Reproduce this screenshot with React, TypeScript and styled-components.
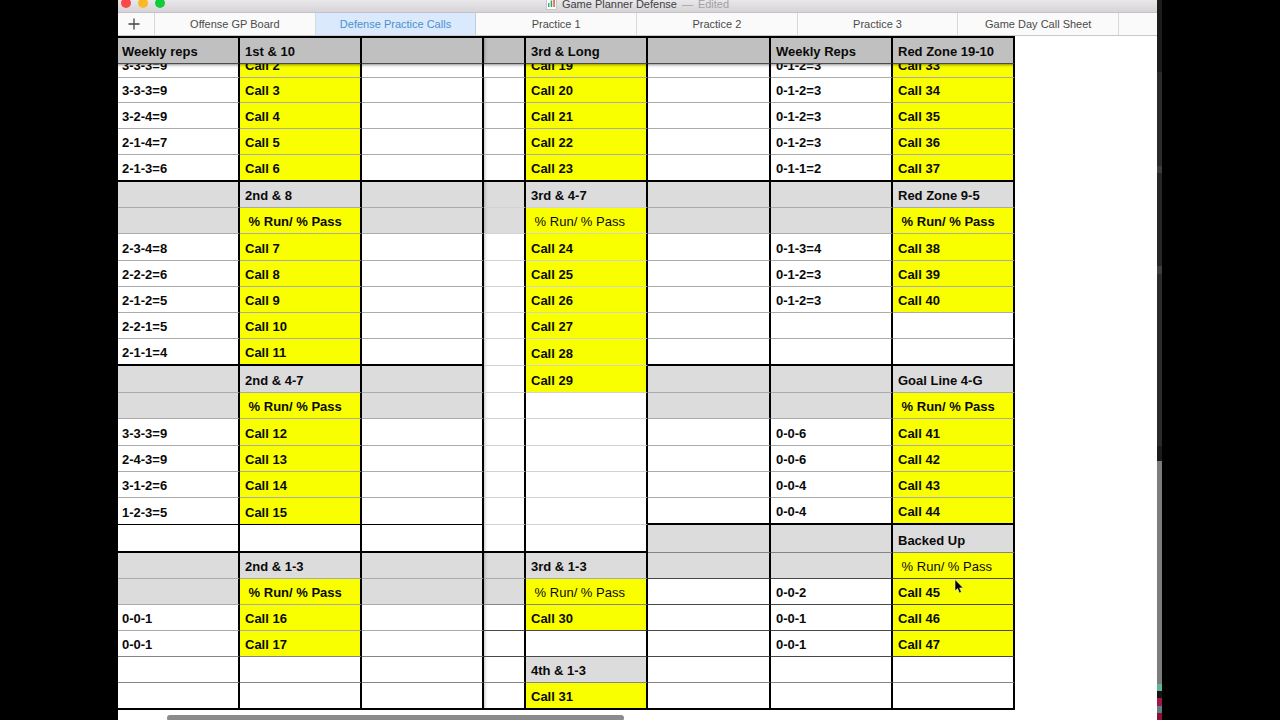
import React from 'react';
import styled, { createGlobalStyle, css } from 'styled-components';

const GlobalStyle = createGlobalStyle`
  * { box-sizing: border-box; }
  body { margin: 0; background: #000; font-family: 'Liberation Sans', Arial, sans-serif; }
`;

const Page = styled.div`
  display: flex;
  height: 100vh;
  padding: 0 118px;
  overflow: hidden;
  background: #000;
`;

const Window = styled.main`
  flex: 1;
  min-width: 0;
  display: flex;
  flex-direction: column;
  background: #fff;
  overflow: hidden;
`;

const DesktopEdge = styled.div`
  flex: 0 0 5px;
  background: linear-gradient(
    #1c1c1c 0 10%, #2b2b2b 10% 23%, #3c3c3c 23% 24%, #262626 24% 37%, #3e3e3e 37% 38%,
    #2b2b2b 38% 62%, #1c1c1c 62% 64%, #7d7d7d 64% 95%, #5fb495 95% 96%, #151515 96% 97%,
    #a01848 97% 98%, #5d7f80 98% 99%, #8c1038 99%
  );
`;

const TitleBar = styled.header`
  flex: none;
  display: grid;
  grid-template-columns: 1fr auto 1fr;
  grid-template-rows: 12px;
  align-items: end;
  height: 13px;
  overflow: hidden;
  background: linear-gradient(#e9e7e9, #d6d4d6);
  border-bottom: 1px solid #c4c2c4;
`;

const Lights = styled.div`
  display: flex;
  gap: 7px;
  padding: 0 0 4px 3px;
`;

const Light = styled.button<{ $color: string }>`
  width: 10px;
  height: 10px;
  padding: 0;
  border: 0;
  border-radius: 50%;
  background: ${(p) => p.$color};
`;

const Title = styled.h1`
  display: flex;
  align-items: center;
  gap: 5px;
  margin: 0;
  font-size: 11px;
  line-height: 16px;
  font-weight: 400;
  color: #3f3f3f;
`;

const Edited = styled.span`
  color: #a3a1a3;
`;

const TabBar = styled.nav`
  flex: none;
  display: flex;
  height: 23px;
  padding-right: 38px;
  background: #fafafa;
  border-bottom: 1px solid #c9c9c9;
`;

const AddTab = styled.button`
  flex: 0 0 37px;
  display: flex;
  align-items: center;
  justify-content: center;
  padding: 0 4px 0 0;
  border: 0;
  border-right: 1px solid #d8d8d8;
  background: transparent;
`;

const Tab = styled.button<{ $active: boolean }>`
  flex: 1 1 0;
  padding: 0;
  border: 0;
  border-right: 1px solid ${(p) => (p.$active ? '#b9cfe8' : '#d8d8d8')};
  background: ${(p) => (p.$active ? '#dbe9fc' : 'transparent')};
  color: ${(p) => (p.$active ? '#4a90d0' : '#4a4a4a')};
  font: 11px/22px 'Liberation Sans', Arial, sans-serif;
  white-space: nowrap;
`;

const Sheet = styled.table`
  flex: none;
  align-self: flex-start;
  table-layout: fixed;
  width: 897px;
  border-collapse: separate;
  border-spacing: 0;
  border-top: 2px solid #000;
  font-size: 13px;
  color: #0a0a0a;
`;

const Col = styled.col<{ $width: number }>`
  width: ${(p) => p.$width}px;
`;

const freezeShadow = css`
  box-shadow: inset 4px 0 3px -3px rgba(0, 0, 0, 0.25);
`;

const HeadCell = styled.th<{ $split: boolean }>`
  height: 26px;
  padding: 2px 5px 0;
  line-height: 23px;
  text-align: left;
  white-space: nowrap;
  background: #c0c0c0;
  border-right: 2px solid #000;
  border-bottom: 1px solid #4c4c4c;
  ${(p) => p.$split && freezeShadow}

  &:first-child {
    padding-left: 4px;
  }
`;

type Fill = 'w' | 'g' | 'y';
type Line = 'light' | 'gray' | 'mid' | 'dark' | 'black' | 'thick';

const fills: Record<Fill, string> = { w: '#fff', g: '#dcdcdc', y: '#faff00' };
const lines: Record<Line, string> = {
  light: '1px solid #d2d2d2',
  gray: '1px solid #ababab',
  mid: '1px solid #858585',
  dark: '1px solid #484848',
  black: '1px solid #000',
  thick: '2px solid #000',
};

const CellText = styled.div<{ $height: number }>`
  display: flex;
  align-items: flex-end;
  height: ${(p) => p.$height}px;
  padding: 0 5px;
  overflow: hidden;
  line-height: 22px;
  white-space: pre;
`;

const Cell = styled.td<{ $fill: Fill; $line: Line; $plain: boolean; $split: boolean; $under: boolean }>`
  position: relative;
  padding: 0;
  background: ${(p) => fills[p.$fill]};
  border-right: 2px solid #000;
  border-bottom: ${(p) => lines[p.$line]};
  font-weight: ${(p) => (p.$plain ? 400 : 700)};
  ${(p) => p.$split && freezeShadow}
  ${(p) => p.$under && css`box-shadow: inset 0 3px 3px -2px rgba(0, 0, 0, 0.45);`}

  &:first-child ${CellText} {
    padding-left: 4px;
  }
`;

const Pointer = styled.svg`
  position: absolute;
  left: 61px;
  top: 0;
`;

const ScrollThumb = styled.div`
  flex: none;
  width: 44%;
  height: 6px;
  margin: 5px 0 0 49px;
  border-radius: 3px;
  background: #8b8b8d;
`;

const RUN = ' % Run/ % Pass';
const RUN_PLAIN = ' % Run/ % Pass ';

const columns = [122, 122, 122, 42, 122, 123, 122, 122];
const headings = ['Weekly reps', '1st & 10', '', '', '3rd & Long', '', 'Weekly Reps', 'Red Zone 19-10'];
const tabs = ['Offense GP Board', 'Defense Practice Calls', 'Practice 1', 'Practice 2', 'Practice 3', 'Game Day Call Sheet'];

interface SheetRow {
  height: number;
  fill: string;
  // rules below the left, middle and right blocks of columns
  rule: [Line, Line, Line];
  // reps, left call, middle call, right reps, right call
  text: [string, string, string, string, string];
}

const row = (height: number, fill: string, rule: SheetRow['rule'], ...text: SheetRow['text']): SheetRow => ({
  height,
  fill,
  rule,
  text,
});

const plainRule: SheetRow['rule'] = ['gray', 'gray', 'gray'];
const softRule: SheetRow['rule'] = ['gray', 'light', 'gray'];

const rows: SheetRow[] = [
  row(14, 'wywwywwy', plainRule, '3-3-3=9', 'Call 2', 'Call 19', '0-1-2=3', 'Call 33'),
  row(25, 'wywwywwy', plainRule, '3-3-3=9', 'Call 3', 'Call 20', '0-1-2=3', 'Call 34'),
  row(26, 'wywwywwy', plainRule, '3-2-4=9', 'Call 4', 'Call 21', '0-1-2=3', 'Call 35'),
  row(26, 'wywwywwy', plainRule, '2-1-4=7', 'Call 5', 'Call 22', '0-1-2=3', 'Call 36'),
  row(27, 'wywwywwy', ['thick', 'thick', 'thick'], '2-1-3=6', 'Call 6', 'Call 23', '0-1-1=2', 'Call 37'),
  row(26, 'gggggggg', softRule, '', '2nd & 8', '3rd & 4-7', '', 'Red Zone 9-5'),
  row(26, 'gyggyggy', softRule, '', RUN, RUN_PLAIN, '', RUN),
  row(27, 'wywwywwy', softRule, '2-3-4=8', 'Call 7', 'Call 24', '0-1-3=4', 'Call 38'),
  row(26, 'wywwywwy', softRule, '2-2-2=6', 'Call 8', 'Call 25', '0-1-2=3', 'Call 39'),
  row(26, 'wywwywwy', softRule, '2-1-2=5', 'Call 9', 'Call 26', '0-1-2=3', 'Call 40'),
  row(26, 'wywwywww', softRule, '2-2-1=5', 'Call 10', 'Call 27', '', ''),
  row(27, 'wywwywww', ['thick', 'light', 'thick'], '2-1-1=4', 'Call 11', 'Call 28', '', ''),
  row(27, 'gggwyggg', softRule, '', '2nd & 4-7', 'Call 29', '', 'Goal Line 4-G'),
  row(26, 'gygwwggy', softRule, '', RUN, '', '', RUN),
  row(27, 'wywwwwwy', softRule, '3-3-3=9', 'Call 12', '', '0-0-6', 'Call 41'),
  row(26, 'wywwwwwy', softRule, '2-4-3=9', 'Call 13', '', '0-0-6', 'Call 42'),
  row(26, 'wywwwwwy', softRule, '3-1-2=6', 'Call 14', '', '0-0-4', 'Call 43'),
  row(27, 'wywwwwwy', ['black', 'light', 'thick'], '1-2-3=5', 'Call 15', '', '0-0-4', 'Call 44'),
  row(28, 'wwwwwggg', ['thick', 'thick', 'mid'], '', '', '', '', 'Backed Up'),
  row(26, 'gggggggy', ['gray', 'gray', 'dark'], '', '2nd & 1-3', '3rd & 1-3', '', RUN_PLAIN),
  row(26, 'gyggywwy', ['gray', 'mid', 'dark'], '', RUN, RUN_PLAIN, '0-0-2', 'Call 45'),
  row(26, 'wywwywwy', ['gray', 'dark', 'dark'], '0-0-1', 'Call 16', 'Call 30', '0-0-1', 'Call 46'),
  row(26, 'wywwwwwy', ['mid', 'dark', 'dark'], '0-0-1', 'Call 17', '', '0-0-1', 'Call 47'),
  row(26, 'wwwwgwww', ['mid', 'mid', 'mid'], '', '', '4th & 1-3', '', ''),
  row(27, 'wwwwywww', ['thick', 'thick', 'thick'], '', '', 'Call 31', '', ''),
];

const blockOf = (column: number) => (column < 3 ? 0 : column < 5 ? 1 : 2);

function DocumentIcon() {
  return (
    <svg width="11" height="14" viewBox="0 0 11 14" aria-hidden="true">
      <rect x="0.5" y="0.5" width="10" height="12" fill="#fdfdfd" stroke="#c8c8c8" />
      <rect x="2" y="6" width="1.5" height="4" fill="#35a8a0" />
      <rect x="4.7" y="3.5" width="1.5" height="6.5" fill="#3b9f4a" />
      <rect x="7.3" y="3" width="1.5" height="7" fill="#d8564a" />
    </svg>
  );
}

function MousePointer() {
  return (
    <Pointer width="11" height="16" viewBox="0 0 11 16" aria-hidden="true">
      <path d="M1 0.5V12L3.6 9.6L5.4 14L7.4 13.1L5.6 8.9H9.2Z" fill="#000" stroke="#f4f4d0" strokeWidth="0.6" />
    </Pointer>
  );
}

export default function App() {
  return (
    <Page>
      <GlobalStyle />
      <Window>
        <TitleBar>
          <Lights>
            <Light $color="#fb4948" aria-label="Close" />
            <Light $color="#fdb924" aria-label="Minimize" />
            <Light $color="#10cb3c" aria-label="Zoom" />
          </Lights>
          <Title>
            <DocumentIcon />
            <span>Game Planner Defense</span>
            <Edited>—</Edited>
            <Edited>Edited</Edited>
          </Title>
        </TitleBar>
        <TabBar>
          <AddTab aria-label="Add sheet">
            <svg width="12" height="12" viewBox="0 0 12 12" aria-hidden="true">
              <path d="M6 0.5V11.5M0.5 6H11.5" stroke="#444" strokeWidth="1.3" />
            </svg>
          </AddTab>
          {tabs.map((tab) => (
            <Tab key={tab} $active={tab === 'Defense Practice Calls'}>
              {tab}
            </Tab>
          ))}
        </TabBar>
        <Sheet>
          <colgroup>
            {columns.map((width, i) => (
              <Col key={i} $width={width} />
            ))}
          </colgroup>
          <thead>
            <tr>
              {headings.map((heading, i) => (
                <HeadCell key={i} scope="col" $split={i === 3}>
                  {heading}
                </HeadCell>
              ))}
            </tr>
          </thead>
          <tbody>
            {rows.map((r, n) => {
              const [reps, left, middle, rightReps, right] = r.text;
              const texts = [reps, left, '', '', middle, '', rightReps, right];
              return (
                <tr key={n}>
                  {texts.map((text, i) => {
                    const line = r.rule[blockOf(i)];
                    return (
                      <Cell
                        key={i}
                        $fill={r.fill[i] as Fill}
                        $line={line}
                        $plain={text === RUN_PLAIN}
                        $split={i === 3}
                        $under={n === 0}
                      >
                        <CellText $height={r.height - (line === 'thick' ? 2 : 1)}>{text}</CellText>
                        {text === 'Call 45' && <MousePointer />}
                      </Cell>
                    );
                  })}
                </tr>
              );
            })}
          </tbody>
        </Sheet>
        <ScrollThumb />
      </Window>
      <DesktopEdge />
    </Page>
  );
}
